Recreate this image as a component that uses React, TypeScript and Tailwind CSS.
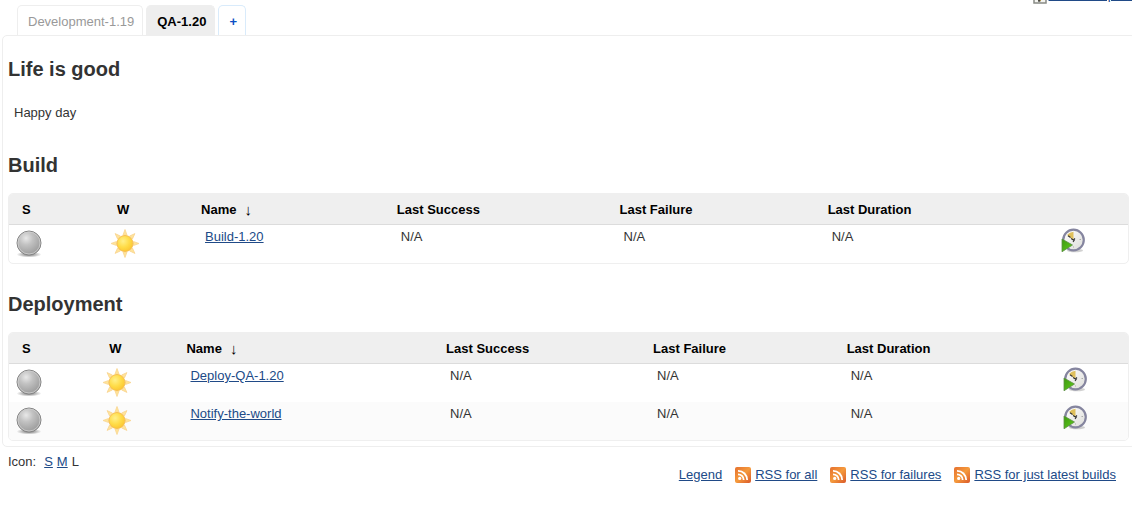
import { useId } from "react";

const link = "text-[#204a87] underline";

function Ball() {
  const id = useId();
  return (
    <svg viewBox="0 0 28 28" className="block size-7" role="img" aria-label="Not built">
      <defs>
        <radialGradient id={id + "b"} cx="0.38" cy="0.3" r="0.7">
          <stop offset="0" stopColor="#e8e8e8" />
          <stop offset="0.4" stopColor="#c2c2c2" />
          <stop offset="1" stopColor="#9c9c9c" />
        </radialGradient>
        <radialGradient id={id + "s"}>
          <stop offset="0.3" stopColor="#000" stopOpacity="0.4" />
          <stop offset="1" stopColor="#000" stopOpacity="0" />
        </radialGradient>
      </defs>
      <ellipse cx="13" cy="24.5" rx="12.5" ry="3" fill={`url(#${id}s)`} />
      <circle cx="13" cy="13" r="12" fill={`url(#${id}b)`} stroke="#858585" />
      <circle cx="13" cy="13" r="11" fill="none" stroke="#d0d0d0" strokeOpacity="0.8" />
    </svg>
  );
}

const rays = [0, 45, 90, 135, 180, 225, 270, 315];

function Sun() {
  const id = useId();
  return (
    <svg viewBox="0 0 30 30" className="block size-[30px]" role="img" aria-label="Healthy">
      <defs>
        <radialGradient id={id} cx="0.38" cy="0.35" r="0.7">
          <stop offset="0" stopColor="#fff08a" />
          <stop offset="0.55" stopColor="#ffdc48" />
          <stop offset="1" stopColor="#fbc530" />
        </radialGradient>
      </defs>
      {rays.map((a) => (
        <path key={a} d="M14 .5 16 6 12 6Z" fill="#ffe49a" stroke="#f9d592" strokeWidth="0.8" transform={`rotate(${a} 14 14.5)`} />
      ))}
      <circle cx="14" cy="14.5" r="8" fill={`url(#${id})`} stroke="#f8bf50" />
    </svg>
  );
}

function ClockIcon() {
  const id = useId();
  return (
    <svg viewBox="0 0 24 26" className="block h-[26px] w-6" aria-hidden="true">
      <defs>
        <linearGradient id={id + "f"} x1="0" y1="0" x2="1" y2="1">
          <stop offset="0" stopColor="#fff" />
          <stop offset="1" stopColor="#dcdcd8" />
        </linearGradient>
        <linearGradient id={id + "g"} x1="0" y1="0" x2="1" y2="1">
          <stop offset="0" stopColor="#3f9a10" />
          <stop offset="1" stopColor="#5fcc1c" />
        </linearGradient>
      </defs>
      <ellipse cx="14" cy="22.5" rx="8" ry="1.8" fill="#000" fillOpacity="0.18" />
      <circle cx="12.5" cy="12" r="10.3" fill={`url(#${id}f)`} stroke="#85859f" strokeWidth="2.2" />
      <path d="M12.5 12 6 7 Q8.500 4 12.5 3.800Z" fill="#dfc05c" />
      <path d="M7 7.800 9.500 9.500M10 10.500 12.500 12 14 10.500M13.500 12 12 14" fill="none" stroke="#333" strokeWidth="1.1" />
      <path d="M18.500 11.500h1.500M12.500 18.500v1" stroke="#aaa" />
      <path d="M1 11 11.5 17 1 23.8Z" fill={`url(#${id}g)`} stroke="#5d8f45" strokeWidth="0.8" />
    </svg>
  );
}

function RssIcon() {
  const id = useId();
  return (
    <svg viewBox="0 0 16 16" className="block size-4" aria-hidden="true">
      <defs>
        <linearGradient id={id} x1="0" y1="0" x2="1" y2="1">
          <stop offset="0" stopColor="#e5702f" />
          <stop offset="0.5" stopColor="#f59a3c" />
          <stop offset="1" stopColor="#d9582a" />
        </linearGradient>
      </defs>
      <rect width="16" height="16" rx="2" fill={`url(#${id})`} />
      <circle cx="4.7" cy="11.4" r="1.6" fill="#fff" />
      <path d="M3 7.300A5.700 5.700 0 0 1 8.700 13M3 3.800A9.200 9.200 0 0 1 12.200 13" fill="none" stroke="#fff" strokeWidth="1.8" />
    </svg>
  );
}

function EditIcon() {
  return (
    <svg viewBox="0 0 16 16" className="block size-4" aria-hidden="true">
      <rect x="2" y="2" width="12" height="13" fill="#f4f4f0" stroke="#888a85" strokeWidth="1.5" />
      <path d="M6 12 11 4l2 1.500L8.500 13Z" fill="#d9a520" />
      <path d="M6 11.500 9 13 6.500 14Z" fill="#222" />
    </svg>
  );
}

const buildCols = ["w-[8.5%]", "w-[7.5%]", "w-[17.5%]", "w-[19.9%]", "w-[18.6%]", "w-[21.4%]", "w-[6.6%]"];
const deployCols = ["w-[7.8%]", "w-[6.9%]", "w-[23.2%]", "w-[18.5%]", "w-[17.3%]", "w-[19.9%]", "w-[6.4%]"];
const headers = ["S", "W", "Name", "Last Success", "Last Failure", "Last Duration"];

function JobTable({ label, cols, jobs }: { label: string; cols: string[]; jobs: string[] }) {
  return (
    <div className="overflow-hidden rounded-[5px] border border-[#efefef]">
      <table aria-label={label} className="w-full table-fixed border-separate border-spacing-0 text-left">
        <colgroup>
          {cols.map((c, i) => (
            <col key={i} className={c} />
          ))}
        </colgroup>
        <thead>
          <tr className="bg-[#efefef] text-black">
            {headers.map((h) => (
              <th key={h} scope="col" className="h-[31px] border-b border-[#dcdcdc] pt-0.5 pr-0 pb-0 pl-[13px] font-bold">
                <button type="button" className="flex cursor-pointer items-center gap-2">
                  {h}
                  {h === "Name" && <span className="text-[15px] leading-4 font-normal">↓</span>}
                </button>
              </th>
            ))}
            <td className="border-b border-[#dcdcdc]" />
          </tr>
        </thead>
        <tbody>
          {jobs.map((job) => (
            <tr key={job} className="h-[38px] align-top even:bg-[#fbfbfb]">
              <td className="pt-[5px] pl-[7px]"><Ball /></td>
              <td className="pt-1 pl-[7px]"><Sun /></td>
              <td className="pt-1 pl-[17px]"><a href="#" className={link}>{job}</a></td>
              <td className="pt-1 pl-[17px]">N/A</td>
              <td className="pt-1 pl-[17px]">N/A</td>
              <td className="pt-1 pl-[17px]">N/A</td>
              <td className="pt-[3px] pl-[7px]">
                <button type="button" aria-label={`Schedule a build for ${job}`} className="block cursor-pointer"><ClockIcon /></button>
              </td>
            </tr>
          ))}
        </tbody>
      </table>
    </div>
  );
}

const heading = "text-[20px] leading-6 font-bold text-[#333]";
const tab = "flex h-[30px] items-center rounded-t-[5px] border border-b-0 pt-0.5 pr-2 pl-2.5";
const feeds = ["RSS for all", "RSS for failures", "RSS for just latest builds"];

export default function App() {
  return (
    <div className="overflow-x-hidden bg-white font-['Liberation_Sans',Arial,sans-serif] text-[13px] leading-4 text-[#333]">
      <header className="flex h-[5px] items-end justify-end overflow-hidden">
        <a href="#" className={`-mr-1 flex items-end gap-px pb-px whitespace-nowrap ${link}`}>
          <EditIcon />
          <span className="mb-px">edit description</span>
        </a>
      </header>
      <nav aria-label="Views" className="flex gap-[3px] pl-[17px]">
        <a href="#" className={`${tab} border-[#eee] text-[#999]`}>Development-1.19</a>
        <a href="#" aria-current="page" className={`${tab} border-[#eee] bg-[#eee] font-bold text-black`}>QA-1.20</a>
        <a href="#" aria-label="New view" className={`${tab} border-[#d9ebfb] font-bold text-[#0b4fc4]`}>+</a>
      </nav>
      <main className="-mr-1 ml-0.5 rounded-[5px] border border-[#eee] pt-[21px] pr-[6px] pb-[5px] pl-[5px]">
        <h1 className={heading}>Life is good</h1>
        <p className="mt-6 pl-[6px]">Happy day</p>
        <h2 className={`mt-8 mb-4 ${heading}`}>Build</h2>
        <JobTable label="Build" cols={buildCols} jobs={["Build-1.20"]} />
        <h2 className={`mt-7 mb-4 ${heading}`}>Deployment</h2>
        <JobTable label="Deployment" cols={deployCols} jobs={["Deploy-QA-1.20", "Notify-the-world"]} />
      </main>
      <footer className="flex items-start justify-between pt-[7px] pr-4 pl-2">
        <div className="flex gap-1">
          <span className="mr-1">Icon:</span>
          <a href="#" className={link}>S</a>
          <a href="#" className={link}>M</a>
          <span>L</span>
        </div>
        <div className="flex gap-[13px] pt-[13px]">
          <a href="#" className={link}>Legend</a>
          {feeds.map((f) => (
            <a key={f} href="#" className={`flex gap-1 ${link}`}>
              <RssIcon />
              <span>{f}</span>
            </a>
          ))}
        </div>
      </footer>
    </div>
  );
}
